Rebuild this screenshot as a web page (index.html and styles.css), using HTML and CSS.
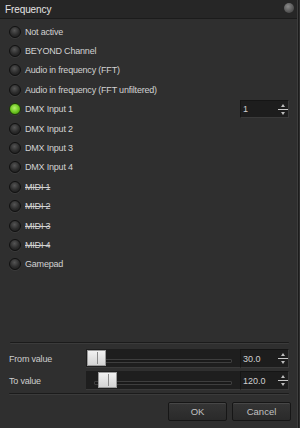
FILE: index.html
```html
<!DOCTYPE html>
<html lang="en">
<head>
    <meta charset="UTF-8">
    <title>Frequency</title>
    <link rel="stylesheet" href="styles.css">
</head>
<body>
    <div class="win">
        <div class="titlebar">
            <span class="title">Frequency</span>
            <span class="close"></span>
        </div>

        <div class="list">
            <div class="row"><span class="radio"></span><span class="lbl">Not active</span></div>
            <div class="row"><span class="radio"></span><span class="lbl">BEYOND Channel</span></div>
            <div class="row"><span class="radio"></span><span class="lbl">Audio in frequency (FFT)</span></div>
            <div class="row"><span class="radio"></span><span class="lbl">Audio in frequency (FFT unfiltered)</span></div>
            <div class="row">
                <span class="radio on"></span><span class="lbl">DMX Input 1</span>
                <div class="spin small"><span class="val">1</span><span class="arrows"><i class="up"></i><b></b><i class="down"></i></span></div>
            </div>
            <div class="row"><span class="radio"></span><span class="lbl">DMX Input 2</span></div>
            <div class="row"><span class="radio"></span><span class="lbl">DMX Input 3</span></div>
            <div class="row"><span class="radio"></span><span class="lbl">DMX Input 4</span></div>
            <div class="row"><span class="radio"></span><span class="lbl strike">MIDI 1</span></div>
            <div class="row"><span class="radio"></span><span class="lbl strike">MIDI 2</span></div>
            <div class="row"><span class="radio"></span><span class="lbl strike">MIDI 3</span></div>
            <div class="row"><span class="radio"></span><span class="lbl strike">MIDI 4</span></div>
            <div class="row"><span class="radio"></span><span class="lbl">Gamepad</span></div>
        </div>

        <div class="sep"></div>

        <div class="srow first">
            <span class="slbl">From value</span>
            <div class="slider"><div class="groove"></div><div class="handle" style="left: 1px"></div></div>
            <div class="spin"><span class="val">30.0</span><span class="arrows"><i class="up"></i><b></b><i class="down"></i></span></div>
        </div>
        <div class="srow">
            <span class="slbl">To value</span>
            <div class="slider"><div class="groove"></div><div class="handle" style="left: 12px"></div></div>
            <div class="spin"><span class="val">120.0</span><span class="arrows"><i class="up"></i><b></b><i class="down"></i></span></div>
        </div>

        <div class="sep sep2"></div>

        <div class="buttons">
            <button class="btn">OK</button>
            <button class="btn">Cancel</button>
        </div>
    </div>
</body>
</html>
```

FILE: styles.css
```css
body { margin: 0; background: #2f2f2f; font-family: "Liberation Sans", Arial, sans-serif; }
.win { width: 298px; height: 428px; box-sizing: border-box; padding-bottom: 7px; background: #2f2f2f; border-right: 1px solid #3d3d3d; box-shadow: 1px 0 0 #1c1c1c; display: flex; flex-direction: column; }

.titlebar { height: 18px; background: #262626; border-bottom: 1px solid #1b1b1b; display: flex; align-items: center; justify-content: space-between; padding: 0 3px 0 5px; }
.title { color: #e4e4e4; font-size: 10px; letter-spacing: -0.1px; }
.close { width: 10px; height: 10px; border-radius: 50%; background: radial-gradient(circle at 40% 35%, #8a8a8a, #555 60%, #3a3a3a); margin-top: -2px; }

.list { padding-top: 3px; }
.row { height: 19.4px; display: flex; align-items: center; padding-left: 9px; }
.radio { width: 10px; height: 10px; border-radius: 50%; border: 1px solid #111; background: radial-gradient(circle at 45% 35%, #555, #2b2b2b 55%, #1a1a1a); box-shadow: 0 1px 0 #3a3a3a; flex: none; }
.radio.on { background: radial-gradient(circle at 45% 40%, #b4f06a, #69c21e 55%, #3f7d10); border-color: #1d3a08; }
.lbl { color: #d2d2d2; font-size: 9px; letter-spacing: -0.2px; margin-left: 4px; }
.strike { text-decoration: line-through; }

.spin { width: 49px; height: 18px; background: #1d1d1d; border: 1px solid #151515; border-right-color: #3a3a3a; border-bottom-color: #3a3a3a; display: flex; align-items: center; justify-content: space-between; box-sizing: border-box; }
.spin.small { margin-left: auto; margin-right: 8px; }
.val { color: #d0d0d0; font-size: 9px; padding-left: 2px; }
.arrows { display: flex; flex-direction: column; align-items: center; width: 11px; }
.arrows i { width: 0; height: 0; border-left: 2.5px solid transparent; border-right: 2.5px solid transparent; }
.arrows .up { border-bottom: 3px solid #bdbdbd; }
.arrows .down { border-top: 3px solid #bdbdbd; }
.arrows b { width: 10px; height: 1px; background: #c8c8c8; margin: 2px 0; }

.sep { margin: auto 8px 0 10px; height: 0; border-top: 1px solid #1b1b1b; border-bottom: 1px solid #3b3b3b; border-radius: 1px; }
.sep2 { margin: 3px 8px 0 9px; }

.srow { display: flex; align-items: center; height: 19px; margin-top: 3px; padding-left: 9px; }
.srow.first { margin-top: 5px; }
.slbl { width: 77px; color: #cdcdcd; font-size: 9px; letter-spacing: -0.2px; }
.slider { position: relative; width: 154px; height: 19px; background: #1e1e1e; border-bottom: 1px solid #3a3a3a; box-sizing: border-box; }
.groove { position: absolute; left: 8px; right: 8px; top: 10px; height: 2px; background: #1a1a1a; border: 1px solid #3e3e3e; border-radius: 1px; }
.handle { position: absolute; top: 1px; width: 19px; height: 16px; background: linear-gradient(to bottom, #f2f2f2, #d4d4d4); border: 1px solid #9a9a9a; box-sizing: border-box; }
.handle::after { content: ""; position: absolute; left: 9px; top: 1px; bottom: 1px; width: 1px; background: #8a8a8a; }
.srow .spin { height: 19px; }

.buttons { display: flex; justify-content: flex-end; gap: 5px; padding: 7px 6px 0 0; }
.btn { width: 59px; height: 19px; background: linear-gradient(to bottom, #353535, #2a2a2a); border: 1px solid #161616; box-shadow: inset 0 1px 0 #474747; color: #c2c2c2; font-family: "Liberation Sans", Arial, sans-serif; font-size: 9.5px; padding: 0; border-radius: 2px; }
```
